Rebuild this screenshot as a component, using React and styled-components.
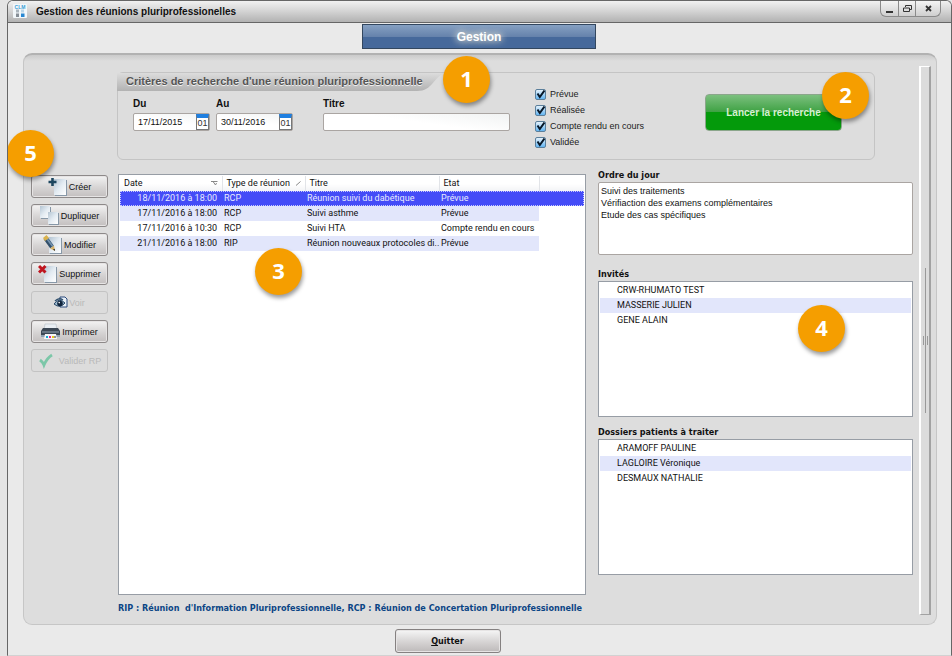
import React, { useState } from "react"
import styled, { createGlobalStyle, css } from "styled-components"

const GlobalStyle = createGlobalStyle`
  * {
    box-sizing: border-box;
  }
  body {
    margin: 0;
    background: #e4e4e4;
    color: #111;
    font-family: "Liberation Sans", Arial, sans-serif;
    font-size: 9px;
  }
  button, input, textarea {
    font-family: inherit;
    font-size: inherit;
    color: inherit;
    margin: 0;
  }
`

const tableFont = css`
  font-family: Roboto, "Liberation Sans", sans-serif;
  font-size: 9px;
`

const labelFont = css`
  font-family: "DejaVu Sans Condensed", Tahoma, "DejaVu Sans", sans-serif;
  font-size: 9px;
  font-weight: bold;
`

const Window = styled.div`
  min-height: 100vh;
  margin-left: 7px;
  display: flex;
  flex-direction: column;
  background: #eaeaea;
  border: 1px solid #666;
  border-bottom-color: #d2d2d2;
  border-radius: 6px 6px 0 0;
  overflow: hidden;
`

const TitleBar = styled.header`
  display: flex;
  height: 22px;
  padding: 0 10px 0 5px;
  border-bottom: 1px solid #666;
  background: linear-gradient(#f1f1f1, #d6d6d6 45%, #b2b2b2);
`

const WindowTitle = styled.h1`
  flex: 1;
  margin: 0 0 0 9px;
  font-size: 10px;
  line-height: 21px;
`

const Logo = styled.svg`
  width: 14px;
  height: 14px;
  margin-top: 3px;
`

const WindowButtons = styled.div`
  display: flex;
  height: 16px;
  border: 1px solid #8a8a8a;
  border-top: 0;
  border-radius: 0 0 6px 6px;
  background: linear-gradient(#f4f4f4, #cfcfcf);
  overflow: hidden;
`

const WindowButton = styled.button`
  display: flex;
  align-items: center;
  justify-content: center;
  width: ${(props) => (props.$wide ? 25 : 17)}px;
  padding: 0;
  border: 0;
  background: none;
  &:not(:first-child) {
    border-left: 1px solid #8a8a8a;
  }
`

const Tabs = styled.nav`
  display: flex;
  justify-content: center;
  padding: 1px 1px 4px 0;
`

const Tab = styled.button`
  width: 234px;
  height: 25px;
  padding: 0;
  border: 1px solid #33475f;
  background: linear-gradient(#86a0c2, #6683ac 50%, #46699b 52%, #46699b);
  color: #fff;
  font-size: 12px;
  font-weight: bold;
  text-shadow: 0 0 6px #e8e8d8, 0 0 8px #cfcfc8;
`

const Panel = styled.main`
  flex: 1;
  display: flex;
  gap: 6px;
  margin: 0 14px 0 15px;
  padding: 11px 5px 9px 7px;
  border: 1px solid #c6c6c6;
  border-top: 2px solid #b2b2b2;
  border-radius: 9px;
  background: linear-gradient(#cbcbcb, #dddddd 6px);
`

const Content = styled.div`
  flex: 1;
  min-width: 0;
  display: flex;
  flex-direction: column;
`

const Search = styled.section`
  position: relative;
  display: flex;
  height: 88px;
  margin: 6px 38px 8px 86px;
  padding-left: 15px;
  border: 1px solid #c4c4c4;
  border-radius: 6px;
`

const SearchTitle = styled.h2`
  position: absolute;
  top: 0;
  left: -1px;
  margin: 0;
  padding: 0 24px 0 9px;
  height: 18px;
  font-size: 11px;
  line-height: 17px;
  white-space: nowrap;
  color: #555;
  text-shadow: 0 1px 0 #f0f0f0;
  background: linear-gradient(#dcdcdc, #b2b2b2);
  clip-path: path("M0 0H328C316 4 316 18 300 18H0Z");
`

const Field = styled.label`
  display: flex;
  flex-direction: column;
  gap: 3px;
  margin: 25px 6px 0 0;
  width: 77px;
  font-weight: bold;
  font-size: 10px;
  line-height: 12px;
`

const TitleField = styled(Field)`
  width: 187px;
  margin-left: 24px;
`

const InputBox = styled.span`
  display: flex;
  align-items: center;
  height: 18px;
  border: 1px solid #aaa5a2;
  border-radius: 2px;
  background: linear-gradient(8deg, #fff 50%, #f1f3f3);
`

const TextInput = styled.input`
  flex: 1;
  min-width: 0;
  height: 16px;
  padding: 0 4px;
  border: 0;
  outline: 0;
  background: none;
  font-size: 9px;
`

const CalendarButton = styled.button`
  width: 13px;
  height: 16px;
  padding: 0;
  border: 1px solid #777;
  border-top: 4px solid #1f7fe0;
  background: #fff;
  color: #333;
  font-size: 9px;
  line-height: 11px;
`

const Checks = styled.div`
  margin: 13px 0 0 19px;
`

const Check = styled.label`
  display: flex;
  align-items: center;
  gap: 4px;
  height: 16px;
  white-space: nowrap;
  color: #222;
`

const CheckInput = styled.input`
  appearance: none;
  width: 11px;
  height: 11px;
  border: 1px solid #5b7f9b;
  border-radius: 2px;
  background: linear-gradient(#e4f1fb, #63b5f2);
  &:checked {
    background:
      url("data:image/svg+xml,%3Csvg xmlns='http://www.w3.org/2000/svg' viewBox='0 0 9 9'%3E%3Cpath d='M1.5 3.5L3.8 7 8.5 0.5' fill='none' stroke='%23081828' stroke-width='2'/%3E%3C/svg%3E"),
      linear-gradient(#e4f1fb, #63b5f2);
  }
`

const SearchAction = styled.div`
  position: relative;
  margin: 21px 32px 0 auto;
`

const SearchButton = styled.button`
  width: 137px;
  height: 37px;
  border: 1px solid #8ba68b;
  border-radius: 4px;
  background: linear-gradient(#7cc07f, #3fa244 48%, #049a0b 50%, #049a0b);
  color: #d5f0d0;
  font-size: 10px;
  font-weight: bold;
`

const Columns = styled.div`
  flex: 1;
  display: grid;
  grid-template-columns: 77px minmax(0, 1fr) 315px;
  column-gap: 10px;
`

const Toolbar = styled.div`
  position: relative;
  display: flex;
  flex-direction: column;
  gap: 6px;
  padding-top: 7px;
`

const ToolButton = styled.button`
  display: flex;
  align-items: center;
  justify-content: center;
  gap: 1px;
  height: 23px;
  padding: 0;
  border: 1px solid #8d8989;
  border-radius: 3px;
  background: linear-gradient(#f3f3f3, #d6d4d4 55%, #c3bfbf);
  box-shadow: inset 0 0 0 1px #e6e4e4;
  white-space: nowrap;
  &:disabled {
    color: #b9b9b9;
    border-color: #c3c3c3;
    background: #dcdcdc;
    box-shadow: none;
  }
`

const ToolIcon = styled.svg`
  width: ${(props) => props.$width || 20}px;
  height: 19px;
  flex: none;
`

const Meetings = styled.div`
  display: flex;
  flex-direction: column;
  padding: 6px 2px 0 0;
`

const ListBox = styled.div`
  position: relative;
  flex: ${(props) => (props.$grow ? 1 : "none")};
  min-height: 136px;
  padding: 1px;
  border: 1px solid #979da5;
  background: #fff;
  ${tableFont}
`

const Table = styled.table`
  width: 100%;
  table-layout: fixed;
  border-collapse: collapse;
  line-height: 15px;
`

const HeadCell = styled.th`
  height: 15px;
  width: ${(props) => (props.$width ? props.$width + "px" : "auto")};
  padding: 0 4px;
  text-align: left;
  font-weight: normal;
  white-space: nowrap;
  border-right: 1px solid #e2e4e8;
  background: linear-gradient(#fff 50%, #f3f4f6);
  &:last-child {
    border-right: 0;
  }
`

const HeadLabel = styled.span`
  display: flex;
  align-items: center;
  justify-content: space-between;
`

const Cell = styled.td`
  height: 15px;
  padding: 0 2px;
  text-align: ${(props) => (props.$right ? "right" : "left")};
  padding-right: ${(props) => (props.$right ? 5 : 0)}px;
  white-space: nowrap;
`

const Row = styled.tr`
  &:nth-child(even) ${Cell}:not(:last-child) {
    background: #e2e6fb;
  }
  ${(props) =>
    props.$selected &&
    css`
      color: #e8ebff;
      background: #444cf7;
      outline: 1px dotted #c7caff;
      outline-offset: -1px;
    `}
`

const Footnote = styled.p`
  margin: 6px 0 0;
  line-height: 14px;
  white-space: pre;
  color: #0b4585;
  ${labelFont}
`

const Section = styled.section`
  margin-bottom: ${(props) => props.$gap || 0}px;
`

const SectionTitle = styled.label`
  display: block;
  margin: 0;
  line-height: 14px;
  ${labelFont}
`

const Agenda = styled.textarea`
  display: block;
  width: 100%;
  height: 73px;
  padding: 2px;
  border: 1px solid #aaa5a2;
  border-radius: 2px;
  outline: 0;
  resize: none;
  background: #fff;
  line-height: 12px;
`

const Names = styled.ul`
  margin: 0;
  padding: 0;
  list-style: none;
  line-height: 15px;
`

const Name = styled.li`
  padding-left: 17px;
  &:nth-child(even) {
    background: #e2e6fb;
  }
`

const Splitter = styled.div`
  display: flex;
  flex-direction: column;
  align-items: center;
  justify-content: center;
  width: 12px;
  border: 1px solid #a2a2a2;
  border-width: 1px 2px 1px 2px;
  border-top-color: #fff;
  border-left-color: #fff;
  background: #dcdcdc;
`

const SplitterLine = styled.span`
  width: 1px;
  height: 68px;
  background: #999;
`

const Grip = styled.span`
  width: 5px;
  height: 9px;
  background: repeating-linear-gradient(90deg, #999 0 1px, #ddd 1px 2px);
`

const Footer = styled.footer`
  display: flex;
  justify-content: center;
  padding: 4px 64px 2px 0;
`

const QuitButton = styled.button`
  width: 106px;
  height: 24px;
  padding: 0;
  border: 1px solid #858181;
  border-radius: 3px;
  background: linear-gradient(#f6f6f6, #d8d6d6 50%, #bdb9b9);
  box-shadow: inset 0 0 0 1px #e6e4e4;
  ${labelFont}
`

const Badge = styled.span`
  position: absolute;
  z-index: 2;
  top: ${(props) => props.$top}px;
  left: ${(props) => props.$left}px;
  width: 47px;
  height: 47px;
  border-radius: 50%;
  background: #f59e00;
  box-shadow: 1px 3px 4px rgba(0, 0, 0, 0.4);
  color: #fff;
  font: bold 22px/45px "Open Sans", sans-serif;
  text-align: center;
`

const Page = ({ x, y, w = 12, h = 16 }) => (
  <>
    <rect x={x + 1} y={y + 1} width={w} height={h} fill="#8798a8" />
    <rect x={x} y={y} width={w} height={h} fill="url(#page)" />
  </>
)

const icons = {
  create: (
    <ToolIcon viewBox="0 0 20 19">
      <Page x={6} y={2} />
      <path d="M0.500 5h8M4.500 1v8" stroke="#1c465f" strokeWidth="2.600" />
    </ToolIcon>
  ),
  duplicate: (
    <ToolIcon viewBox="0 0 20 19">
      <Page x={0} y={0} w={10} h={12} />
      <Page x={8} y={6} w={10} h={12} />
    </ToolIcon>
  ),
  edit: (
    <ToolIcon viewBox="0 0 20 19">
      <Page x={6} y={2} />
      <path d="M2.500 3L9 12" stroke="#33506b" strokeWidth="4.600" />
      <path d="M3 2.500L9.800 11.500" stroke="#7291ad" strokeWidth="1.800" />
      <path d="M0 3L3.500 0L6 3L2 6Z" fill="#d9b24d" />
      <path d="M7 13.500L11 10.500L12 16Z" fill="#d8b36a" />
      <path d="M10 14.500L11.700 13.800L12 16Z" fill="#222" />
    </ToolIcon>
  ),
  remove: (
    <ToolIcon viewBox="0 0 20 19">
      <Page x={6} y={2} />
      <path d="M1 2L7.500 8.500M7.500 2L1 8.500" stroke="#bf1620" strokeWidth="3" />
    </ToolIcon>
  ),
  view: (
    <ToolIcon viewBox="0 0 14 19" $width={14}>
      <path d="M6 4h5l2 2v8H6Z" fill="#eaf1f8" stroke="#2b4b7c" />
      <path d="M0 11Q5 4 11 10Q6 16 0 11Z" fill="#9dbad0" stroke="#294766" />
      <circle cx="6" cy="10.500" r="2.800" fill="#10243c" />
      <path d="M1 8Q5 4 9 7" fill="none" stroke="#31516f" strokeWidth="1.400" />
      <circle cx="5.200" cy="9.600" r="0.800" fill="#fff" />
    </ToolIcon>
  ),
  print: (
    <ToolIcon viewBox="0 0 20 19">
      <path d="M4 2H15L16 8H3Z" fill="#e9eef3" stroke="#b5bdc6" strokeWidth="0.600" />
      <path d="M2 6H17L19 9V14H0V9Z" fill="#3c4754" />
      <path d="M1 10H18" stroke="#7c8a99" strokeWidth="1.400" />
      <path d="M0 13H19V15H0Z" fill="#8fa0b2" />
      <path d="M4 12H15L16 17H3Z" fill="#f6f7f9" />
      <path d="M5 15h2" stroke="#17a7d8" strokeWidth="2" />
      <path d="M8 15h2" stroke="#df2b8a" strokeWidth="2" />
      <path d="M11 15h2" stroke="#ecc81c" strokeWidth="2" />
      <path d="M13.500 15h1" stroke="#333" strokeWidth="2" />
    </ToolIcon>
  ),
  validate: (
    <ToolIcon viewBox="0 0 20 19">
      <path d="M2 9Q5 11 6 14Q9 7 14 4" fill="none" stroke="#7cc7a8" strokeWidth="2.800" />
    </ToolIcon>
  ),
}

const tools = [
  { label: "Créer", icon: "create" },
  { label: "Dupliquer", icon: "duplicate" },
  { label: "Modifier", icon: "edit" },
  { label: "Supprimer", icon: "remove" },
  { label: "Voir", icon: "view", disabled: true },
  { label: "Imprimer", icon: "print" },
  { label: "Valider RP", icon: "validate", disabled: true },
]

const meetings = [
  ["18/11/2016 à 18:00", "RCP", "Réunion suivi du dabétique", "Prévue"],
  ["17/11/2016 à 18:00", "RCP", "Suivi asthme", "Prévue"],
  ["17/11/2016 à 10:30", "RCP", "Suivi HTA", "Compte rendu en cours"],
  ["21/11/2016 à 18:00", "RIP", "Réunion nouveaux protocoles di..", "Prévue"],
]

const statuses = ["Prévue", "Réalisée", "Compte rendu en cours", "Validée"]
const guests = ["CRW-RHUMATO TEST", "MASSERIE JULIEN", "GENE ALAIN"]
const patients = ["ARAMOFF PAULINE", "LAGLOIRE Véronique", "DESMAUX NATHALIE"]
const agenda = `Suivi des traitements
Vérifiaction des examens complémentaires
Etude des cas spécifiques`

function DateField({ label, value }) {
  return (
    <Field>
      {label}
      <InputBox>
        <TextInput type="text" defaultValue={value} />
        <CalendarButton type="button" aria-label={"Calendrier " + label}>01</CalendarButton>
      </InputBox>
    </Field>
  )
}

function NameList({ labelId, names }) {
  return (
    <Names aria-labelledby={labelId}>
      {names.map((name) => (
        <Name key={name}>{name}</Name>
      ))}
    </Names>
  )
}

function App() {
  const [selected, setSelected] = useState(0)

  return (
    <>
      <GlobalStyle />
      <Window>
        <TitleBar>
          <Logo viewBox="0 0 14 14">
            <defs>
              <linearGradient id="page" x1="0" y1="0" x2="1" y2="1">
                <stop offset="0" stopColor="#b3c4d2" />
                <stop offset="0.500" stopColor="#e3ebf2" />
                <stop offset="1" stopColor="#fff" />
              </linearGradient>
            </defs>
            <rect width="14" height="14" rx="1" fill="#f2f7fa" />
            <text x="7" y="4.500" fontSize="5" fontWeight="bold" textAnchor="middle" fill="#3a9fd6">CLM</text>
            <path d="M3 5.500h3v3H3Z" fill="#aab4bc" />
            <path d="M8 5.500h3v3H8Z" fill="#b9d6e8" />
            <path d="M3 9.500h3v3.500H3Z" fill="#868e96" />
            <path d="M8 9.500h3.500v3.500H8Z" fill="#2787d2" />
          </Logo>
          <WindowTitle>Gestion des réunions pluriprofessionelles</WindowTitle>
          <WindowButtons>
            <WindowButton aria-label="Réduire">
              <svg width="8" height="10"><path d="M0 8h7" stroke="#333" strokeWidth="2" /></svg>
            </WindowButton>
            <WindowButton aria-label="Restaurer">
              <svg width="9" height="9" fill="none" stroke="#333">
                <path d="M2.500 3V1.500H8.500V5.500H7" />
                <path d="M0.500 4H6.500V7.500H0.500Z" />
              </svg>
            </WindowButton>
            <WindowButton $wide aria-label="Fermer">
              <svg width="7" height="7"><path d="M1 1L6 6M6 1L1 6" stroke="#333" strokeWidth="1.800" /></svg>
            </WindowButton>
          </WindowButtons>
        </TitleBar>

        <Tabs>
          <Tab type="button">Gestion</Tab>
        </Tabs>

        <Panel>
          <Content>
            <Search>
              <SearchTitle>Critères de recherche d'une réunion pluriprofessionnelle</SearchTitle>
              <Badge $top={-17} $left={325}>1</Badge>
              <DateField label="Du" value="17/11/2015" />
              <DateField label="Au" value="30/11/2016" />
              <TitleField>
                Titre
                <InputBox>
                  <TextInput type="text" />
                </InputBox>
              </TitleField>
              <Checks>
                {statuses.map((status) => (
                  <Check key={status}>
                    <CheckInput type="checkbox" defaultChecked />
                    {status}
                  </Check>
                ))}
              </Checks>
              <SearchAction>
                <SearchButton type="button">Lancer la recherche</SearchButton>
                <Badge $top={-22} $left={117}>2</Badge>
              </SearchAction>
            </Search>

            <Columns>
              <Toolbar>
                <Badge $top={-38} $left={-24}>5</Badge>
                {tools.map((tool) => (
                  <ToolButton key={tool.label} type="button" disabled={tool.disabled}>
                    {icons[tool.icon]}
                    {tool.label}
                  </ToolButton>
                ))}
              </Toolbar>

              <Meetings>
                <ListBox $grow>
                  <Table>
                    <thead>
                      <tr>
                        <HeadCell $width={102}>
                          <HeadLabel>
                            Date
                            <svg width="7" height="5"><path d="M0 0.500H6.500M2 0.500L4.500 4L5.500 2" fill="none" stroke="#888" /></svg>
                          </HeadLabel>
                        </HeadCell>
                        <HeadCell $width={83}>
                          <HeadLabel>
                            Type de réunion
                            <svg width="5" height="5"><path d="M0 4.500L4.500 0.500" stroke="#888" /></svg>
                          </HeadLabel>
                        </HeadCell>
                        <HeadCell $width={134}>Titre</HeadCell>
                        <HeadCell $width={100}>Etat</HeadCell>
                        <HeadCell />
                      </tr>
                    </thead>
                    <tbody>
                      {meetings.map(([date, type, title, state], index) => (
                        <Row key={index} $selected={index === selected} onClick={() => setSelected(index)}>
                          <Cell $right>{date}</Cell>
                          <Cell>{type}</Cell>
                          <Cell>{title}</Cell>
                          <Cell>{state}</Cell>
                          <Cell />
                        </Row>
                      ))}
                    </tbody>
                  </Table>
                  <Badge $top={73} $left={136}>3</Badge>
                </ListBox>
                <Footnote>RIP : Réunion  d'Information Pluriprofessionnelle, RCP : Réunion de Concertation Pluriprofessionnelle</Footnote>
              </Meetings>

              <div>
                <Section $gap={12}>
                  <SectionTitle htmlFor="agenda">Ordre du jour</SectionTitle>
                  <Agenda id="agenda" defaultValue={agenda} />
                </Section>
                <Section $gap={8}>
                  <SectionTitle as="h3" id="guests">Invités</SectionTitle>
                  <ListBox>
                    <NameList labelId="guests" names={guests} />
                    <Badge $top={23} $left={199}>4</Badge>
                  </ListBox>
                </Section>
                <Section>
                  <SectionTitle as="h3" id="patients">Dossiers patients à traiter</SectionTitle>
                  <ListBox>
                    <NameList labelId="patients" names={patients} />
                  </ListBox>
                </Section>
              </div>
            </Columns>
          </Content>

          <Splitter>
            <SplitterLine />
            <Grip />
            <SplitterLine />
          </Splitter>
        </Panel>

        <Footer>
          <QuitButton type="button"><u>Q</u>uitter</QuitButton>
        </Footer>
      </Window>
    </>
  )
}

export default App
